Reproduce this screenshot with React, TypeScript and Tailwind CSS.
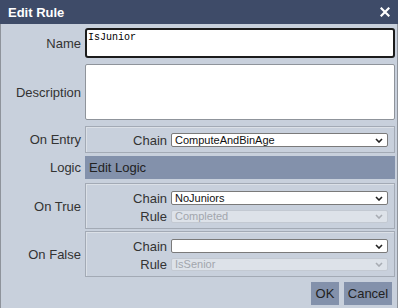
import React from "react";

const Chevron = ({ color }: { color: string }) => (
  <svg width="8" height="5" viewBox="0 0 8 5" className="shrink-0">
    <path d="M1 1 L4 4 L7 1" fill="none" stroke={color} strokeWidth="1.6" />
  </svg>
);

const Select = ({ value, disabled }: { value: string; disabled?: boolean }) => (
  <div
    className={
      disabled
        ? "flex h-[13px] items-center justify-between rounded-[2px] border border-[#c3c9d2] bg-[#dde2e9] pl-[3px] pr-[4px] text-[11px] leading-none text-[#a2a6ad]"
        : "flex h-[14px] items-center justify-between rounded-[2px] border border-[#7a7a7a] bg-white pl-[3px] pr-[4px] text-[11px] leading-none text-[#111]"
    }
  >
    <span>{value}</span>
    <Chevron color={disabled ? "#a8acb3" : "#222"} />
  </div>
);

const Row = ({ label, children, className }: { label: string; children: React.ReactNode; className?: string }) => (
  <div className={"grid grid-cols-[80px_1fr] items-center gap-x-[4px] " + (className ?? "")}>
    <div className="text-right text-[13px] leading-none text-[#333]">{label}</div>
    {children}
  </div>
);

const Group = ({ rows, className }: { rows: { label: string; value: string; disabled?: boolean }[]; className: string }) => (
  <div className={"flex flex-col gap-[5px] border border-[#a3aab5] pr-[6px] shadow-[inset_1px_1px_0_#dbe0e7] " + className}>
    {rows.map((r) => (
      <div key={r.label} className="grid grid-cols-[81px_1fr] items-center gap-x-[4px]">
        <div className="text-right text-[13px] leading-none text-[#333]">{r.label}</div>
        <Select value={r.value} disabled={r.disabled} />
      </div>
    ))}
  </div>
);

export default function App() {
  return (
    <div className="flex h-[308px] w-[398px] flex-col overflow-hidden bg-[#c8d0dc]" style={{ fontFamily: '"Liberation Sans", Arial, sans-serif' }}>
      <div className="flex h-[24px] shrink-0 items-center justify-between bg-[#3e4b68] pl-[8px] pr-[8px]">
        <span className="text-[13px] font-bold leading-none text-white">Edit Rule</span>
        <svg width="10" height="10" viewBox="0 0 10 10">
          <path d="M1.5 1.5 L8.5 8.5 M8.5 1.5 L1.5 8.5" stroke="white" strokeWidth="2.2" strokeLinecap="square" />
        </svg>
      </div>
      <div className="flex flex-1 flex-col border-x border-[#8e939b] pr-[2px]">
        <Row label="Name" className="mt-[4px]">
          <div className="h-[30px] rounded-[3px] border-2 border-[#1c1c1c] bg-white px-[1px] pt-[1px] text-[10px] leading-[13px] text-black" style={{ fontFamily: '"Liberation Mono", "Courier New", monospace' }}>
            IsJunior
          </div>
        </Row>
        <Row label="Description" className="mt-[6px]">
          <div className="h-[56px] rounded-[2px] border border-[#8f949b] bg-white" />
        </Row>
        <Row label="On Entry" className="mt-[6px]">
          <Group className="pt-[6px] pb-[5px]" rows={[{ label: "Chain", value: "ComputeAndBinAge" }]} />
        </Row>
        <Row label="Logic" className="mt-[3px]">
          <div className="flex h-[23px] items-center bg-[#8391ab] pl-[4px] text-[13px] leading-none text-[#222]">Edit Logic</div>
        </Row>
        <Row label="On True" className="mt-[4px]">
          <Group
            className="pt-[7px] pb-[5px]"
            rows={[
              { label: "Chain", value: "NoJuniors" },
              { label: "Rule", value: "Completed", disabled: true },
            ]}
          />
        </Row>
        <Row label="On False" className="mt-[2px]">
          <Group
            className="pt-[7px] pb-[5px]"
            rows={[
              { label: "Chain", value: "" },
              { label: "Rule", value: "IsSenior", disabled: true },
            ]}
          />
        </Row>
        <div className="mt-[5px] mr-[3px] flex justify-end gap-[5px]">
          <div className="flex h-[23px] w-[28px] items-center justify-center bg-[#8391ab] text-[13px] leading-none text-[#222]">OK</div>
          <div className="flex h-[23px] w-[48px] items-center justify-center bg-[#8391ab] text-[13px] leading-none text-[#222]">Cancel</div>
        </div>
      </div>
    </div>
  );
}
